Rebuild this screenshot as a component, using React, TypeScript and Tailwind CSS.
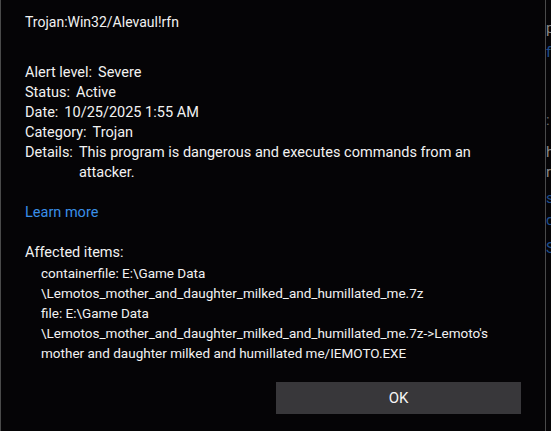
const rows: [string, string[]][] = [
  ['Alert level:', ['Severe']],
  ['Status:', ['Active']],
  ['Date:', ['10/25/2025 1:55 AM']],
  ['Category:', ['Trojan']],
  ['Details:', ['This program is dangerous and executes commands from an', 'attacker.']],
];

const items = [
  'containerfile: E:\\Game Data',
  '\\Lemotos_mother_and_daughter_milked_and_humillated_me.7z',
  'file: E:\\Game Data',
  "\\Lemotos_mother_and_daughter_milked_and_humillated_me.7z->Lemoto's",
  'mother and daughter milked and humillated me/IEMOTO.EXE',
];

// bits of the window behind the dialog, clipped at the right edge
function BehindStrip() {
  return (
    <div className="w-[5px] overflow-hidden text-[15px] leading-5 whitespace-nowrap">
      <div className="mt-[18px] text-[#8a8a8a]">p</div>
      <div className="mt-[4px] text-[#1f4f8f]">f</div>
      <div className="mt-[48px] text-[#6a6a6a]">:</div>
      <div className="mt-[12px] text-[#8a8a8a]">h</div>
      <div className="text-[#8a8a8a]">r</div>
      <div className="mt-[6px] text-[#1f4f8f]">s</div>
      <div className="mt-[2px] text-[#1f4f8f]">d</div>
      <div className="mt-[8px] text-[#1f4f8f]">S</div>
    </div>
  );
}

export default function App() {
  return (
    <div className="flex w-[551px] h-[431px] bg-[#050406] text-[#f2f2f2] overflow-hidden font-['Roboto','Noto_Sans',sans-serif]">
      <div className="flex flex-col w-[546px] h-full border-l border-r border-[#4a4a4a] pl-[24px] pr-[24px] pt-[12px] text-[14.5px] leading-5">
        <div className="text-[14px]">Trojan:Win32/Alevaul!rfn</div>

        <div className="mt-[31px] flex flex-col">
          {rows.map(([label, value]) => (
            <div key={label} className="flex gap-[6px]">
              <span>{label}</span>
              <div className="flex flex-col">
                {value.map((v) => (
                  <span key={v}>{v}</span>
                ))}
              </div>
            </div>
          ))}
        </div>

        <div className="mt-[20px] text-[#3a8fe8]">Learn more</div>

        <div className="mt-[20px]">Affected items:</div>
        <div className="flex flex-col pl-[16px] text-[13.5px]">
          {items.map((t) => (
            <span key={t} className="whitespace-nowrap">{t}</span>
          ))}
        </div>

        <div className="mt-[19px] flex justify-end">
          <button className="w-[245px] h-[32px] bg-[#38373a] text-[#f5f5f5] text-[15px]">OK</button>
        </div>
      </div>
      <BehindStrip />
    </div>
  );
}
